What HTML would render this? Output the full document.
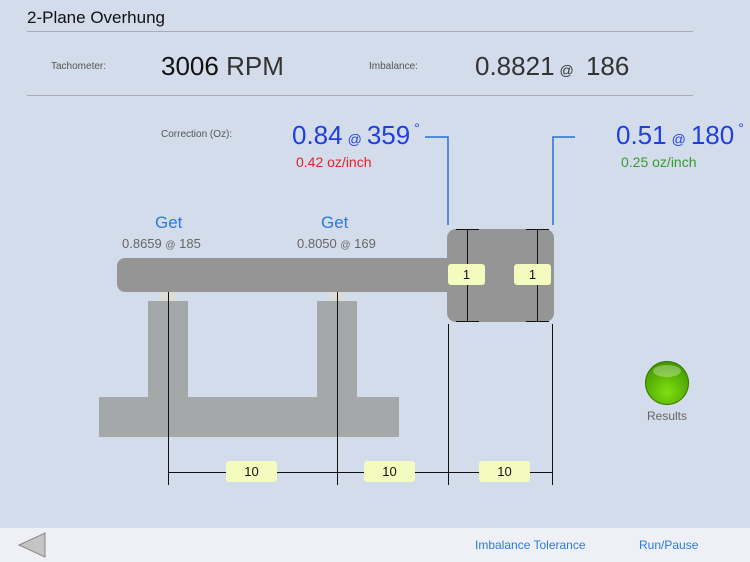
<!DOCTYPE html>
<html><head><style>
body{margin:0;width:750px;height:562px;background:#d2dcea;position:relative;overflow:hidden;font-family:"Liberation Sans",sans-serif}
.a{position:absolute;white-space:nowrap}
.hl{position:absolute;height:1px;background:#a9adb3}
.v{position:absolute;width:1px;background:#111}
.h{position:absolute;height:1px;background:#111}
.y{position:absolute;background:#f3fbbe;border-radius:3px;font-size:13px;text-align:center;color:#111}
.at{font-size:14px;margin:0 5px}
</style></head><body>
<div class="a" style="left:27px;top:8px;font-size:17px;color:#111">2-Plane Overhung</div>
<div class="hl" style="left:27px;top:31px;width:666px"></div>
<div class="a" style="left:51px;top:61px;font-size:10px;color:#555">Tachometer:</div>
<div class="a" style="left:161px;top:51px;font-size:26px;color:#111">3006 <span style="color:#333">RPM</span></div>
<div class="a" style="left:369px;top:61px;font-size:10px;color:#555">Imbalance:</div>
<div class="a" style="left:475px;top:51px;font-size:26px;color:#333">0.8821<span class="at">@</span> 186</div>
<div class="hl" style="left:27px;top:95px;width:666px"></div>
<div class="a" style="left:161px;top:129px;font-size:10px;color:#555">Correction (Oz):</div>
<div class="a" style="left:292px;top:120px;font-size:26px;color:#1f3fe0">0.84<span class="at">@</span>359<span style="font-size:14px;vertical-align:top;margin-left:4px">°</span></div>
<div class="a" style="left:296px;top:154px;font-size:14px;color:#e8202a">0.42 oz/inch</div>
<div class="a" style="left:616px;top:120px;font-size:26px;color:#1f3fe0">0.51<span class="at">@</span>180<span style="font-size:14px;vertical-align:top;margin-left:4px">°</span></div>
<div class="a" style="left:621px;top:154px;font-size:14px;color:#3a9a32">0.25 oz/inch</div>
<svg class="a" style="left:0;top:0" width="750" height="562">
<path d="M425 137H448V225M575 137H553V225" fill="none" stroke="#2b6fd0" stroke-width="1.5"/>
</svg>
<div class="a" style="left:155px;top:213px;font-size:17px;color:#2a7ae2">Get</div>
<div class="a" style="left:122px;top:236px;font-size:13px;color:#666">0.8659 <span style="font-size:10px">@</span> 185</div>
<div class="a" style="left:321px;top:213px;font-size:17px;color:#2a7ae2">Get</div>
<div class="a" style="left:297px;top:236px;font-size:13px;color:#666">0.8050 <span style="font-size:10px">@</span> 169</div>
<div class="a" style="left:160px;top:292px;width:16px;height:10px;background:#dcdcd8"></div>
<div class="a" style="left:329px;top:292px;width:16px;height:10px;background:#dcdcd8"></div>
<div class="a" style="left:148px;top:301px;width:40px;height:100px;background:#a5a8a8"></div>
<div class="a" style="left:317px;top:301px;width:40px;height:100px;background:#a5a8a8"></div>
<div class="a" style="left:99px;top:397px;width:300px;height:40px;background:#a5a8a8"></div>
<div class="a" style="left:117px;top:258px;width:340px;height:34px;background:#959595;border-radius:8px"></div>
<div class="a" style="left:447px;top:229px;width:107px;height:93px;background:#959595;border-radius:9px"></div>
<div class="v" style="left:168px;top:292px;height:193px"></div>
<div class="v" style="left:337px;top:292px;height:193px"></div>
<div class="v" style="left:448px;top:324px;height:161px"></div>
<div class="v" style="left:552px;top:324px;height:161px"></div>
<div class="h" style="left:168px;top:472px;width:385px"></div>
<div class="v" style="left:467px;top:229px;height:93px"></div>
<div class="h" style="left:456px;top:229px;width:23px"></div>
<div class="h" style="left:456px;top:321px;width:23px"></div>
<div class="v" style="left:537px;top:229px;height:93px"></div>
<div class="h" style="left:526px;top:229px;width:23px"></div>
<div class="h" style="left:526px;top:321px;width:23px"></div>
<div class="y" style="left:448px;top:264px;width:37px;height:21px;line-height:21px">1</div>
<div class="y" style="left:514px;top:264px;width:37px;height:21px;line-height:21px">1</div>
<div class="y" style="left:226px;top:461px;width:51px;height:21px;line-height:21px">10</div>
<div class="y" style="left:364px;top:461px;width:51px;height:21px;line-height:21px">10</div>
<div class="y" style="left:479px;top:461px;width:51px;height:21px;line-height:21px">10</div>
<div class="a" style="left:645px;top:361px;width:44px;height:44px;border-radius:50%;background:radial-gradient(circle at 50% 70%,#7ee010,#4aa000 70%,#2d7000);box-shadow:inset 0 0 0 1px #3a7a00"></div>
<div class="a" style="left:653px;top:365px;width:28px;height:12px;border-radius:50%;background:rgba(255,255,255,0.3)"></div>
<div class="a" style="left:647px;top:409px;font-size:12px;color:#666">Results</div>
<div class="a" style="left:0;top:528px;width:750px;height:34px;background:#eef0f5"></div>
<svg class="a" style="left:17px;top:532px" width="30" height="26"><polygon points="28,1 28,25 2,13" fill="#c4c4c4" stroke="#888" stroke-width="1"/></svg>
<div class="a" style="left:475px;top:538px;font-size:12px;color:#2a7ae2">Imbalance Tolerance</div>
<div class="a" style="left:639px;top:538px;font-size:12px;color:#2a7ae2">Run/Pause</div>
</body></html>
